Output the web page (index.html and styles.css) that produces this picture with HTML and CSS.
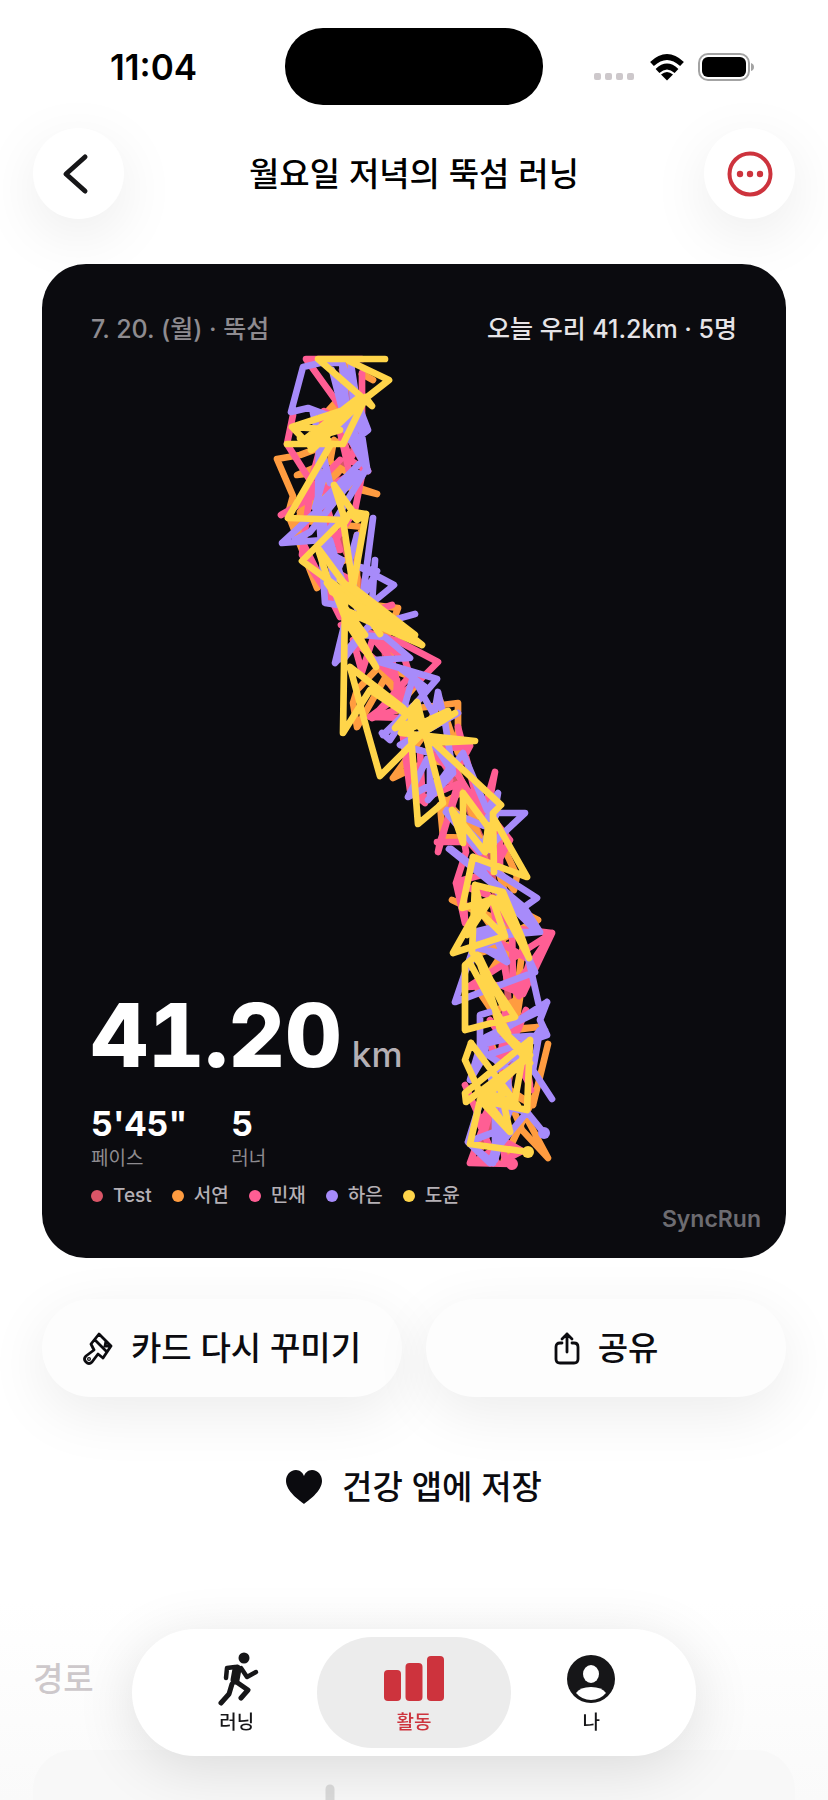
FILE: index.html
```html
<!DOCTYPE html>
<html lang="ko">
<head>
<meta charset="utf-8">
<meta name="viewport" content="width=device-width, initial-scale=1">
<title>월요일 저녁의 뚝섬 러닝</title>
<link rel="stylesheet" href="styles.css">
</head>
<body>
<div class="screen">
  <div class="status">
    <time class="clock">11:04</time>
    <div class="island"></div>
    <div class="indicators">
      <svg width="42" height="28" viewBox="0 0 42 28" fill="#cdc8cb" aria-hidden="true">
        <rect x="0" y="20" width="7" height="7" rx="2"/><rect x="11" y="20" width="7" height="7" rx="2"/><rect x="22" y="20" width="7" height="7" rx="2"/><rect x="33" y="20" width="7" height="7" rx="2"/>
      </svg>
      <svg width="34" height="28" viewBox="0 0 34 28" aria-hidden="true">
        <g fill="none" stroke="#000" stroke-width="5.500"><path d="M2 11Q17-3 32 11"/><path d="M7.500 18Q17 9 26.500 18"/></g>
        <path d="M17 27.500L11 21.500Q17 16.500 23 21.500Z"/>
      </svg>
      <svg width="57" height="28" viewBox="0 0 57 28" aria-hidden="true">
        <rect x="1" y="1" width="50" height="26" rx="9" fill="none" stroke="#a3a3a3" stroke-width="2"/>
        <rect x="4" y="4" width="44" height="20" rx="6"/><path d="M53 10Q56 11 56 14Q56 17 53 18Z" fill="#a3a3a3"/>
      </svg>
    </div>
  </div>

  <header class="nav">
    <button class="round" aria-label="뒤로">
      <svg width="48" height="48" viewBox="0 0 48 48" fill="none" stroke="#161618" stroke-width="5" stroke-linecap="round" stroke-linejoin="round"><path d="M30 7L11 24L30 41"/></svg>
    </button>
    <h1 class="title">월요일 저녁의 뚝섬 러닝</h1>
    <button class="round" aria-label="더 보기">
      <svg width="48" height="48" viewBox="0 0 48 48" fill="#cd333d"><circle cx="24" cy="24" r="20.500" fill="none" stroke="#cd333d" stroke-width="4"/><circle cx="14" cy="24" r="3.200"/><circle cx="24" cy="24" r="3.200"/><circle cx="34" cy="24" r="3.200"/></svg>
    </button>
  </header>

  <main class="content">
    <article class="card">
      <svg class="map" viewBox="42 264 744 994" fill="none" stroke-width="6.700" stroke-linecap="round" stroke-linejoin="round" aria-hidden="true">
        <g stroke="#d95567">
          <path d="M342 370L360 440L320 500L350 560L384 640L387 680L430 740L465 800L490 860L505 960L510 1020L508 1090L480 1150"/>
          <path d="M380 660L388 682M506 970L508 985M510 1075L507 1088"/>
        </g>
        <g stroke="#ff9c40">
          <path d="M362 374L373 380M345 365L340 405L318 422L345 392L349 375M355 437L327 445L300 455L277 459L293 496L288 514L317 588L296 520L363 527L350 558L334 565L320 522L300 512L340 470L297 475L316 467L334 440L330 462L350 474L353 486L377 494L336 484L300 515"/>
          <path d="M357 535L357 603L398 608L386 640L360 600L395 650L357 690L353 703L357 727L385 678L402 697L376 664L420 680L394 711L458 703L458 753L440 700L424 735L393 778L430 760L454 765L463 784L477 825L440 805L443 837L480 838L445 800"/>
          <path d="M440 805L465 790L488 870M504 848L517 876L514 890L498 870L509 905L538 920L520 935L495 918L452 900L494 920M538 920L472 955L508 945L478 990L493 1012L520 998L515 1030L538 1027L500 1030L494 1008L520 1055L500 1060L510 1090L533 1105L548 1044M533 1105L505 1090L522 1130L548 1158L525 1115L504 1160L535 1095M476 905L510 953L492 970M523 945L512 1030M490 1040L512 1100"/>
        </g>
        <g stroke="#ff5e94">
          <path d="M362 359L306 359L342 409M362 373L362 430L340 400M293 415L287 444L311 482L320 448L324 411L339 420L368 471L350 460L338 423L350 475L281 515L330 486L296 505L340 460M355 450L350 460M327 507L340 550L329 550L355 510L365 460M300 537L340 617L351 580L332 570L328 522M309 500L302 555L345 620L392 605L341 625L398 641L438 662L420 680L370 717L405 718L392 660L373 638L362 672L353 640L397 680L396 710L372 718L410 676L405 660L380 640"/>
          <path d="M402 729L410 790L425 803L406 740L420 800L460 783L440 842L438 852L456 790M437 842L500 842L477 800L458 727L482 817L495 772L486 820L456 772L470 746L430 750L453 773M420 750L422 790L450 780M480 803L510 840L494 870L463 835L466 852L456 883L465 923L463 880L500 870L500 842M456 883L488 895L512 928L552 933L523 994L500 985L468 987L552 933L513 990L512 920L492 900L507 980L519 996L530 960L495 940M490 1020L510 1050L530 1085L524 1050L505 1010L500 1068L488 1040L518 1030L526 1010M531 1090L512 1040L500 1050L530 1062M465 1085L485 1130L495 1095L505 1160L522 1151L506 1142L475 1161L497 1163L480 1125L493 1100L470 1163L512 1164"/>
        </g>
        <g stroke="#a78bfa">
          <path d="M342 363L320 363L303 367L291 412L308 408L340 420L368 471L332 370L350 440L342 363L368 430L355 440L351 364L367 468L323 540L282 543L358 473L310 532L295 540M313 413L330 483L319 445L318 500L325 603L338 605L323 520L327 552L342 560L334 580M363 460L315 508L326 469M373 518L362 603M357 535L350 560M375 560L372 603L394 585L360 567L375 571M350 560L357 608L377 571M330 540L345 590M415 614L368 627L335 663L344 626M343 660L362 635L385 637L410 658L373 660L437 679L400 722L413 677L434 715L438 692L442 710M373 660L400 668L425 687"/>
          <path d="M382 733L390 740L402 722L418 705L383 735L413 706M458 713L400 745L430 753L408 797L453 773L428 800L463 753L487 810L498 793L488 850L447 810L484 826L497 796M445 722L453 773L430 738M430 745L430 795L452 765M497 813L525 813L493 843M446 812L480 852L497 813M449 849L500 890L537 932L500 895L473 857L537 898L520 910L538 932L500 932L477 937L540 932L524 907L485 875M451 849L510 895M478 940L502 925L478 931L470 967M478 945L507 962L497 940L477 948L500 953M472 952L455 1002L535 972L528 957L540 1010L547 1002L540 1020L547 1035L513 1037L480 1045L480 1015L490 1012M547 1002L480 1045M542 1010L486 1037L485 1055L470 1080L481 1043M547 1035L488 1055L510 1070L540 1030L533 1070L552 1099M545 1030L490 1075L500 1105L527 1112L500 1145M480 1103L468 1142L490 1163L510 1110L508 1080L493 1163L468 1142L500 1130M527 1112L544 1133M495 1100L495 1160L510 1105"/>
        </g>
        <g stroke="#ffd54a">
          <path d="M385 359L318 359L372 406L366 398L389 380L349 361M366 398L311 450L357 399L304 440L350 408L292 427L340 430L302 441L335 444L287 444L343 444L366 397M292 427L313 449L363 400M300 438L328 440M331 444L288 518L345 520L334 485L353 512L366 514L353 587L343 520L302 561L383 620M318 548L355 598L380 634M366 514L357 520L350 513L345 522"/>
          <path d="M318 549L332 592L415 635L350 585L422 645L345 611L365 635L327 583L382 627M340 580L422 645M332 584L347 623L376 667L345 610L400 632M345 602L343 733L370 690L403 712L420 720L395 728L417 702L423 725L448 711L401 733L475 741L430 743L415 712L410 723L418 824L443 803L425 733L403 708L350 667L367 730L380 776L423 733L455 713M430 739L501 805L493 813L494 872L493 817L527 877L473 857L462 908L490 900"/>
          <path d="M463 793L463 843L452 810L485 852L488 827L463 793M488 825L491 850M475 885L503 892L522 938L529 958L498 900L492 898L505 936L453 953L480 905L475 885L472 952L515 1017L465 1030L465 965L477 955L494 1005L500 1030L530 1063M491 899L467 935M500 896L515 926M478 910L503 935M471 965L508 1033M479 956L504 1008M471 1043L465 1060L482 1097L518 1106L471 1043M530 1040L465 1093L466 1102L529 1055L480 1100L527 1110L530 1040M523 1055L515 1100L500 1087L510 1132L480 1100L470 1144L528 1152M525 1060L490 1093L513 1104M502 1030L529 1055M530 1055L489 1085M478 1090L510 1131"/>
        </g>
        <g stroke="none"><circle cx="512" cy="1164" r="6" fill="#ff5e94"/><circle cx="544" cy="1133" r="6" fill="#a78bfa"/><circle cx="528" cy="1152" r="6" fill="#ffd54a"/></g>
      </svg>
      <div class="card-head"><span class="where">7. 20. (월) · 뚝섬</span><span class="today">오늘 우리 41.2km · 5명</span></div>
      <div class="card-foot">
        <p class="distance">41.20<span class="unit">km</span></p>
        <dl class="stats">
          <div class="stat"><dt>페이스</dt><dd>5'45"</dd></div>
          <div class="stat"><dt>러너</dt><dd>5</dd></div>
        </dl>
        <ul class="legend">
          <li><i class="dot red"></i>Test</li>
          <li><i class="dot orange"></i>서연</li>
          <li><i class="dot pink"></i>민재</li>
          <li><i class="dot purple"></i>하은</li>
          <li><i class="dot yellow"></i>도윤</li>
        </ul>
      </div>
      <span class="brand">SyncRun</span>
    </article>

    <div class="actions">
      <button class="pill">
        <svg width="30" height="34" viewBox="0 0 30 34" fill="none" stroke="#0b0b0f" stroke-width="2.800" stroke-linecap="round" stroke-linejoin="round"><path d="M16 3L28 15L20 27L15 23L9 31Q6 34 3 31Q0 28 3 25L11 19L8 13ZM12 9L24 21M23 10L22 15L27 15"/><circle cx="6" cy="28" r=".6"/></svg>
        카드 다시 꾸미기
      </button>
      <button class="pill">
        <svg width="26" height="34" viewBox="0 0 26 34" fill="none" stroke="#0b0b0f" stroke-width="2.800" stroke-linecap="round" stroke-linejoin="round"><path d="M8 12H6Q2 12 2 16V28Q2 32 6 32H20Q24 32 24 28V16Q24 12 20 12H18M13 21V3M8 8L13 3L18 8"/></svg>
        공유
      </button>
    </div>

    <button class="health">
      <svg width="36" height="34" viewBox="0 0 36 34" fill="#0b0b0f"><path d="M18 34C14 31 0 21 0 11C0 5 4 0 10 0C14 0 17 3 18 6C19 3 22 0 26 0C32 0 36 5 36 11C36 21 22 31 18 34Z"/></svg>
      건강 앱에 저장
    </button>

    <h2 class="section">경로</h2>
    <div class="route">
      <svg width="10" height="16" viewBox="0 0 10 16" aria-hidden="true"><path d="M5 5V24" stroke="#dadada" stroke-width="9" stroke-linecap="round"/></svg>
    </div>
  </main>

  <nav class="tabs">
    <a class="tab" href="#run">
      <svg width="60" height="54" viewBox="0 0 60 54" fill="none" stroke="#161618" stroke-linecap="round" stroke-linejoin="round"><circle cx="37" cy="6" r="5.500" fill="#161618" stroke="none"/><path d="M30 17L28 28" stroke-width="9"/><path d="M28 15L20 16L19 26M34 16L40 25L49 20" stroke-width="4.500"/><path d="M28 29L41 38L34 46M25 32L22 42L14 51" stroke-width="5"/></svg>
      러닝
    </a>
    <a class="tab active" href="#activity" aria-current="page">
      <svg width="60" height="54" viewBox="0 0 60 54" fill="#cd333d"><rect y="18" width="17" height="31" rx="4"/><rect x="21.500" y="11" width="17" height="38" rx="4"/><rect x="43" y="4" width="17" height="45" rx="4"/></svg>
      활동
    </a>
    <a class="tab" href="#me">
      <svg width="60" height="54" viewBox="0 0 60 54"><circle cx="30" cy="27" r="24" fill="#161618"/><ellipse cx="30" cy="22" rx="8" ry="9" fill="#fff"/><path d="M15 41Q19 35 30 35Q41 35 45 41Q39 48 30 48Q21 48 15 41Z" fill="#fff"/></svg>
      나
    </a>
  </nav>
</div>
</body>
</html>
```
FILE: styles.css
```css
* { box-sizing: border-box; }

body {
  margin: 0;
  background: #fff;
  color: #0b0b0f;
  font-family: Inter, "Noto Sans CJK KR", sans-serif;
}

h1, h2, p, dl, dd, ul { margin: 0; padding: 0; }
button { border: 0; background: none; color: inherit; font: inherit; }

.screen {
  display: flex;
  flex-direction: column;
  min-height: 100vh;
  background: linear-gradient(to top, #fafafa 0, #fff 200px);
}

.status {
  display: grid;
  grid-template-columns: 1fr 258px 1fr;
  align-items: center;
  padding-top: 28px;
}
.clock { padding-left: 22px; text-align: center; font-size: 35px; font-weight: 600; line-height: 40px; color: #000; }
.island { height: 77px; border-radius: 38px; background: #000; }
.indicators { display: flex; justify-content: center; gap: 14px; padding-right: 22px; }

.nav { display: flex; align-items: center; justify-content: space-between; padding: 23px 33px 0; }
.round {
  display: grid;
  place-items: center;
  width: 91px;
  height: 91px;
  padding: 0;
  border-radius: 50%;
  background: #fff;
  box-shadow: 0 16px 60px rgba(0, 0, 0, .08);
}
.title { font-size: 33px; font-weight: 500; line-height: 48px; color: #000; }

.content { display: flex; flex: 1; flex-direction: column; padding: 45px 33px 0; }

.card {
  position: relative;
  display: flex;
  flex-direction: column;
  justify-content: space-between;
  aspect-ratio: 744 / 994;
  margin: 0 9px;
  padding: 48px 49px;
  border-radius: 44px;
  background: #0b0b0f;
  color: #fff;
}
.map { position: absolute; inset: 0; width: 100%; height: 100%; }
.card-head, .card-foot { position: relative; }
.card-head { display: flex; justify-content: space-between; font-size: 25px; line-height: 34px; }
.where { color: #8e8b90; font-weight: 500; }
.today { color: #e6e4e7; font-weight: 500; }

.distance { font-size: 88px; font-weight: 800; line-height: 96px; font-variant-numeric: tabular-nums; }
.unit { margin-left: 10px; font-size: 35px; font-weight: 500; color: #b5b0b5; }
.stats { display: flex; gap: 44px; }
.stat { display: flex; flex-direction: column-reverse; }
.stat dt { font-size: 19px; line-height: 26px; color: #8e8b90; }
.stat dd { font-size: 34px; font-weight: 700; line-height: 44px; font-variant-numeric: tabular-nums; }
.legend { display: flex; gap: 20px; margin-top: 10px; list-style: none; font-size: 19px; font-weight: 500; line-height: 28px; color: #b5b0b5; }
.legend li { display: flex; align-items: center; gap: 10px; }
.dot { width: 12px; height: 12px; border-radius: 50%; }
.red { background: #d95567; }
.orange { background: #ff9c40; }
.pink { background: #ff5e94; }
.purple { background: #a78bfa; }
.yellow { background: #ffd54a; }
.brand { position: absolute; right: 25px; bottom: 25px; font-size: 23px; font-weight: 600; line-height: 28px; color: #6d6c71; }

.actions { display: grid; grid-template-columns: 1fr 1fr; gap: 24px; margin: 41px 9px 0; }
.pill, .health { display: flex; align-items: center; justify-content: center; gap: 18px; font-size: 33px; font-weight: 500; line-height: 48px; }
.pill {
  height: 98px;
  padding: 0;
  border-radius: 49px;
  background: #fdfdfd;
  box-shadow: 0 16px 60px rgba(0, 0, 0, .08);
}
.health { gap: 20px; margin-top: 66px; padding: 0; }
.section { margin-top: 144px; font-size: 33px; font-weight: 500; line-height: 48px; color: #cdc8cb; }
.route { display: flex; flex: 1; align-items: flex-end; margin-top: 47px; padding-left: 292px; border-radius: 40px 40px 0 0; background: #f8f8f8; }
.route svg { display: block; }

.tabs {
  position: fixed;
  bottom: 44px;
  left: 50%;
  display: flex;
  width: 564px;
  max-width: 92%;
  padding: 8px 16px;
  border-radius: 64px;
  background: #fff;
  box-shadow: 0 12px 60px rgba(0, 0, 0, .12);
  transform: translateX(-50%);
}
.tab {
  display: flex;
  flex: 1;
  flex-direction: column;
  align-items: center;
  gap: 3px;
  padding: 15px 0 11px;
  font-size: 19px;
  font-weight: 500;
  line-height: 28px;
  color: #161618;
  text-decoration: none;
}
.active { margin: 0 -8px; padding-right: 8px; padding-left: 8px; border-radius: 56px; background: #ececec; color: #cd333d; }
```
